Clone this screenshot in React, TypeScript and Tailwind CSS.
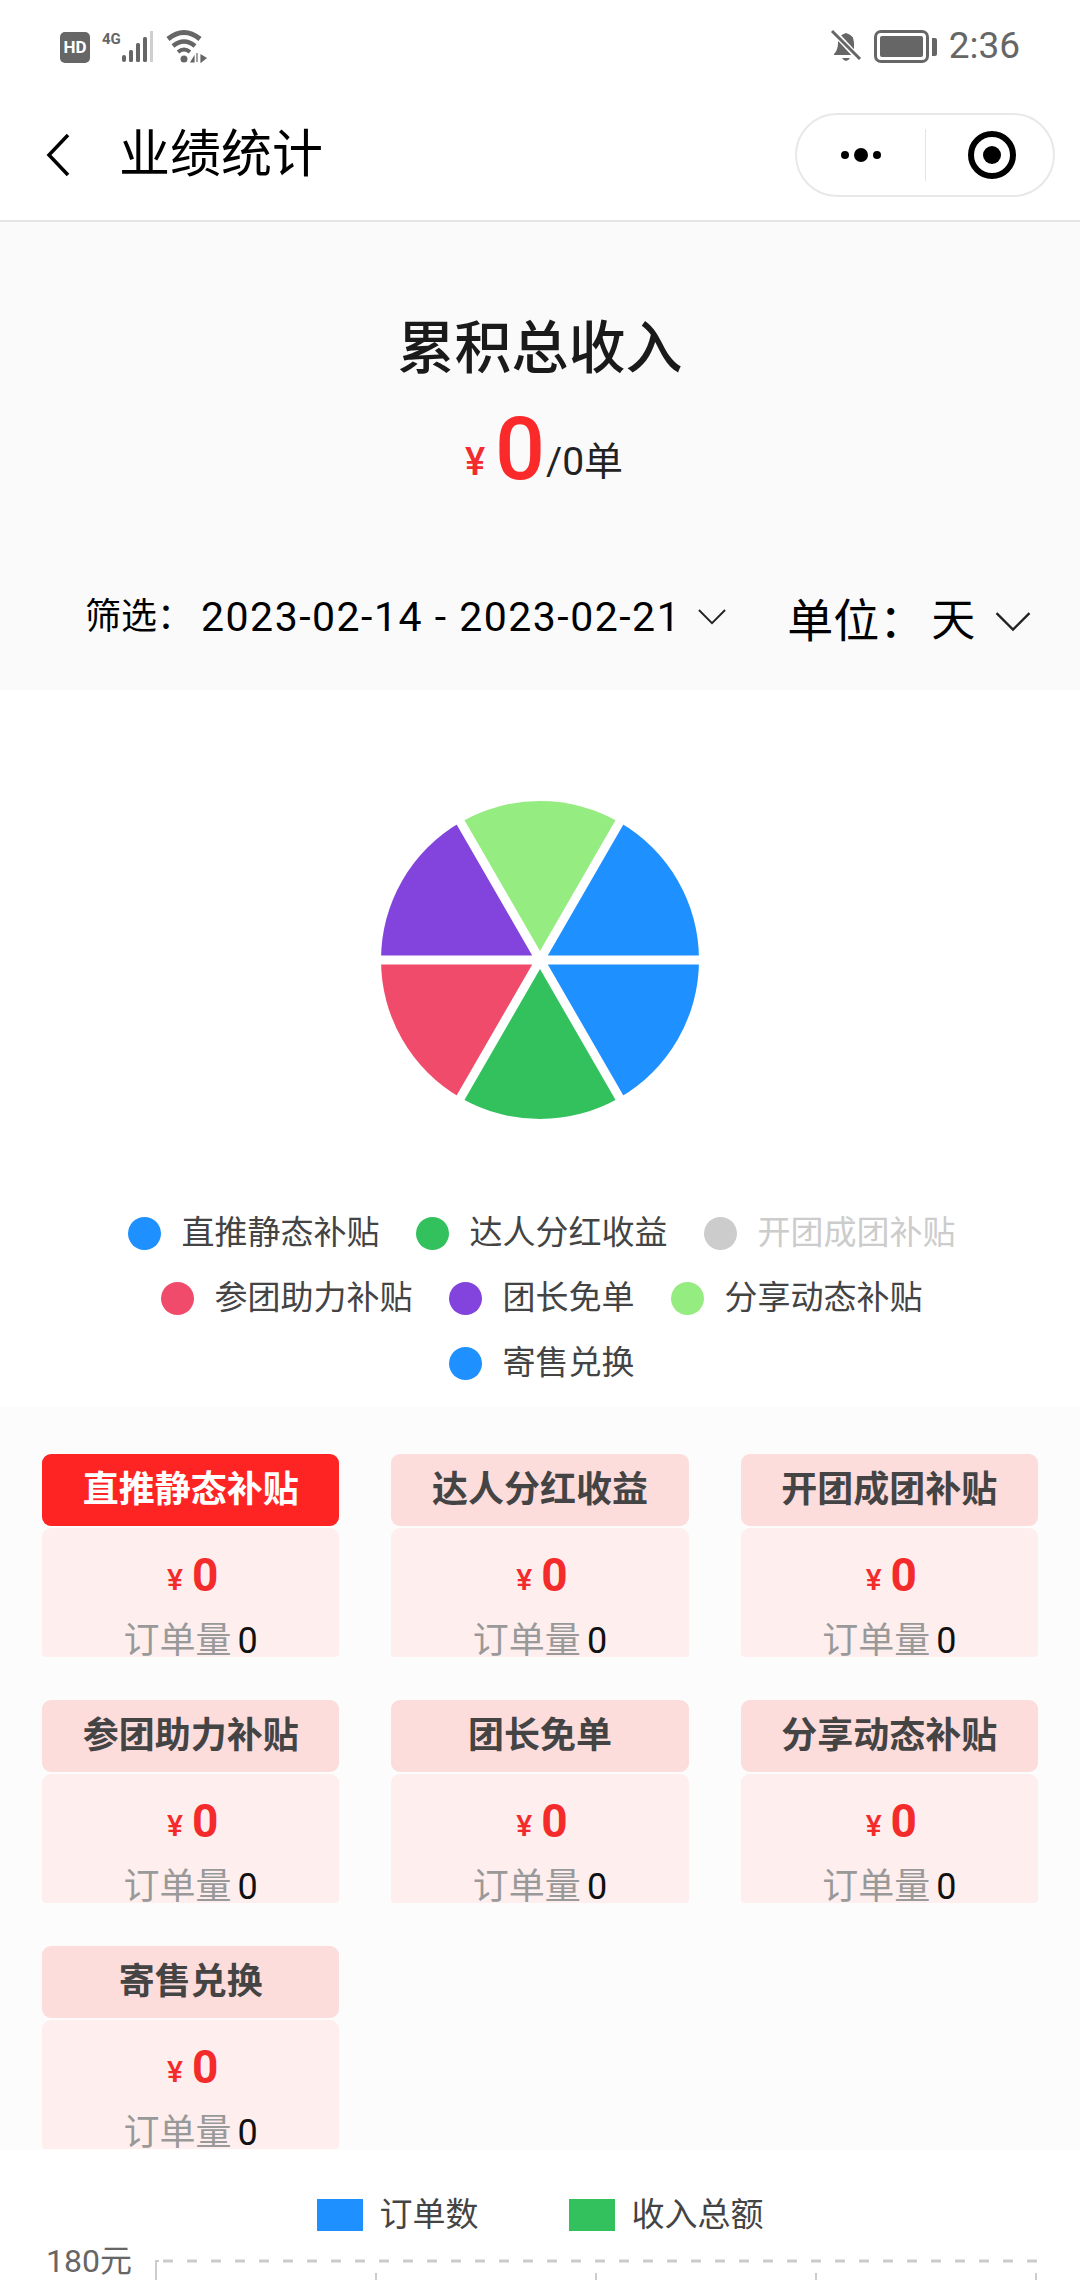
const legendRows = [
  [
    { name: '直推静态补贴', color: 'bg-[#1e90ff]', text: 'text-[#444444]' },
    { name: '达人分红收益', color: 'bg-[#33c15e]', text: 'text-[#444444]' },
    { name: '开团成团补贴', color: 'bg-[#cccccc]', text: 'text-[#cccccc]' },
  ],
  [
    { name: '参团助力补贴', color: 'bg-[#f04b6b]', text: 'text-[#444444]' },
    { name: '团长免单', color: 'bg-[#8244dd]', text: 'text-[#444444]' },
    { name: '分享动态补贴', color: 'bg-[#95ec80]', text: 'text-[#444444]' },
  ],
  [{ name: '寄售兑换', color: 'bg-[#1e90ff]', text: 'text-[#444444]' }],
];

const cards = ['直推静态补贴', '达人分红收益', '开团成团补贴', '参团助力补贴', '团长免单', '分享动态补贴', '寄售兑换'];

function StatusBar() {
  return (
    <div className="h-[70px] flex items-end justify-between pl-[60px] pr-[60px] pb-[7px]">
      <div className="flex items-end">
        <svg width="190" height="34" viewBox="0 0 190 34">
          <rect x="0" y="3" width="30" height="31" rx="5" fill="#666666" />
          <text x="15" y="24" textAnchor="middle" fontSize="17" fontWeight="700" fill="#ffffff" fontFamily="Roboto">HD</text>
          <text x="42" y="15" fontSize="15" fontWeight="700" fill="#666666" fontFamily="Roboto">4G</text>
          <rect x="62" y="26" width="4" height="7" rx="2" fill="#666666" />
          <rect x="69" y="21" width="4" height="12" rx="1.5" fill="#666666" />
          <rect x="76" y="14" width="4" height="19" rx="1.5" fill="#666666" />
          <rect x="83" y="8" width="4" height="25" rx="1.5" fill="#666666" />
          <rect x="90" y="2" width="3" height="31" fill="#cfcfcf" />
          <path d="M108 10 Q124 -3 140 10" fill="none" stroke="#666666" strokeWidth="5" />
          <path d="M113 17 Q124 8 135 17" fill="none" stroke="#666666" strokeWidth="4.5" />
          <path d="M118 23 Q124 18 130 23" fill="none" stroke="#666666" strokeWidth="4" />
          <circle cx="124" cy="30" r="3.5" fill="#666666" />
          <path d="M134 33 L134 28 L131 33 Z M137 24 L137 33 M141 26 L141 33 L146 29 Z" fill="#666666" stroke="#666666" strokeWidth="1.2" />
        </svg>
      </div>
      <div className="flex items-end gap-[12px]">
        <svg width="32" height="34" viewBox="0 0 32 34">
          <path d="M4 25 Q8 21 8 14 Q8 6 16 4 Q24 6 24 14 L24 21 L28 26 L4 26 Z" fill="#666666" />
          <path d="M12 29 Q16 35 20 29 Z" fill="#666666" />
          <path d="M2 1 L30 31" stroke="#ffffff" strokeWidth="6" />
          <path d="M2 2 L30 30" stroke="#666666" strokeWidth="3" />
        </svg>
        <div className="flex items-center gap-[3px]">
          <div className="w-[55px] h-[33px] rounded-[7px] border-[3px] border-[#666666] p-[3px]">
            <div className="w-full h-full rounded-[2px] bg-[#666666]" />
          </div>
          <div className="w-[5px] h-[18px] rounded-r-[2px] bg-[#666666]" />
        </div>
        <div className="text-[37px] leading-[34px] text-[#666666]">2:36</div>
      </div>
    </div>
  );
}

function NavBar() {
  return (
    <div className="h-[152px] border-b-2 border-[#e4e4e4] flex items-center justify-between pl-[46px] pr-[25px] pt-[20px]">
      <div className="flex items-center gap-[49px]">
        <svg width="24" height="44" viewBox="0 0 24 44">
          <path d="M22 2 L3 22 L22 42" fill="none" stroke="#000000" strokeWidth="3.5" />
        </svg>
        <div className="text-[51px] leading-[60px] text-black">业绩统计</div>
      </div>
      <div className="w-[260px] h-[84px] rounded-full border-2 border-[#e8e8e8] flex items-center">
        <div className="w-[129px] h-[52px] border-r border-[#e4e4e4] flex items-center justify-center gap-[5px]">
          <div className="w-[8px] h-[8px] rounded-full bg-black" />
          <div className="w-[14px] h-[14px] rounded-full bg-black" />
          <div className="w-[8px] h-[8px] rounded-full bg-black" />
        </div>
        <div className="flex-1 pl-[5px] flex items-center justify-center">
          <div className="w-[48px] h-[48px] rounded-full border-[6px] border-black flex items-center justify-center">
            <div className="w-[18px] h-[18px] rounded-full bg-black" />
          </div>
        </div>
      </div>
    </div>
  );
}

function Chevron({ width, height }: { width: number; height: number }) {
  return (
    <svg width={width} height={height} viewBox="0 0 30 17" className="shrink-0">
      <path d="M1 1 L15 15 L29 1" fill="none" stroke="#222222" strokeWidth="2" />
    </svg>
  );
}

function Summary() {
  return (
    <div className="h-[468px] shrink-0 bg-[#fafafa] flex flex-col items-center">
      <div className="mt-[95px] text-[57px] leading-[64px] font-medium text-[#1a1a1a]">累积总收入</div>
      <div className="mt-[18px] h-[100px] flex items-end text-[#222222] ml-[8px]">
        <span className="text-[38px] leading-[74px] font-medium text-[#f22c2c] mr-[10px]">¥</span>
        <span className="text-[88px] leading-[100px] font-medium text-[#fb2a2a]">0</span>
        <span className="text-[39px] leading-[74px] ml-[1px]">/0单</span>
      </div>
      <div className="mt-[84px] self-stretch flex items-center pl-[85px] text-black whitespace-nowrap">
        <span className="text-[36px] leading-[50px] shrink-0">筛选：</span>
        <span className="text-[41px] leading-[50px] ml-[8px] tracking-[1.5px] shrink-0">2023-02-14 - 2023-02-21</span>
        <div className="ml-[17px]"><Chevron width={28} height={16} /></div>
        <span className="ml-[61px] text-[46px] leading-[60px] pt-[8px] shrink-0">单位：</span>
        <span className="ml-[6px] text-[44px] leading-[60px] pt-[8px] shrink-0">天</span>
        <div className="ml-[20px] mt-[10px]"><Chevron width={36} height={20} /></div>
      </div>
    </div>
  );
}

function Pie() {
  return (
    <svg width="340" height="340" viewBox="0 0 340 340" className="shrink-0">
      <path d="M170 170 L329 170 A159 159 0 0 0 249.5 32.3 Z" fill="#1e90ff" />
      <path d="M170 170 L249.5 32.3 A159 159 0 0 0 90.5 32.3 Z" fill="#95ec80" />
      <path d="M170 170 L90.5 32.3 A159 159 0 0 0 11 170 Z" fill="#8244dd" />
      <path d="M170 170 L11 170 A159 159 0 0 0 90.5 307.7 Z" fill="#f04b6b" />
      <path d="M170 170 L90.5 307.7 A159 159 0 0 0 249.5 307.7 Z" fill="#33c15e" />
      <path d="M170 170 L249.5 307.7 A159 159 0 0 0 329 170 Z" fill="#1e90ff" />
      <path d="M0 170 L340 170 M71.9 340 L268.1 0 M71.9 0 L268.1 340" stroke="#ffffff" strokeWidth="9" />
    </svg>
  );
}

function PieSection() {
  return (
    <div className="h-[717px] shrink-0 bg-white flex flex-col items-center pt-[100px]">
      <Pie />
      <div className="mt-[83px] pl-[3px] flex flex-col items-center gap-[25px]">
        {legendRows.map((row, i) => (
          <div key={i} className="flex gap-[36px] h-[40px]">
            {row.map((item) => (
              <div key={item.name} className="flex items-center gap-[21px]">
                <div className={`w-[33px] h-[33px] rounded-full ${item.color}`} />
                <span className={`text-[33px] leading-[40px] ${item.text}`}>{item.name}</span>
              </div>
            ))}
          </div>
        ))}
      </div>
    </div>
  );
}

function Card({ title, active }: { title: string; active: boolean }) {
  return (
    <div className="h-[203px] flex flex-col gap-[2px]">
      <div className={`h-[72px] rounded-[9px] flex items-center justify-center text-[36px] font-bold ${active ? 'bg-[#ff2424] text-white' : 'bg-[#fddcdc] text-[#444444]'}`}>
        {title}
      </div>
      <div className="h-[129px] rounded-t-[9px] rounded-b-[4px] bg-[#feeeee] flex flex-col items-center">
        <div className="mt-[22px] ml-[4px] h-[50px] flex items-end gap-[9px] text-[#f32b2b]">
          <span className="text-[30px] leading-[40px] font-medium">¥</span>
          <span className="text-[46px] leading-[50px] font-bold">0</span>
        </div>
        <div className="mt-[25px] text-[36px] leading-[32px] text-[#999999]">
          订单量<span className="ml-[6px] text-[#111111]">0</span>
        </div>
      </div>
    </div>
  );
}

function ChartHead() {
  return (
    <div className="flex-1 bg-white flex flex-col">
      <div className="mt-[49px] h-[32px] flex justify-center gap-[90px]">
        <div className="flex items-center gap-[17px]">
          <div className="w-[46px] h-[32px] bg-[#1e90ff]" />
          <span className="text-[33px] leading-[40px] text-[#444444]">订单数</span>
        </div>
        <div className="flex items-center gap-[17px]">
          <div className="w-[46px] h-[32px] bg-[#33c15e]" />
          <span className="text-[33px] leading-[40px] text-[#444444]">收入总额</span>
        </div>
      </div>
      <div className="mt-[12px] flex pl-[46px]">
        <span className="text-[32px] leading-[36px] text-[#666666] w-[107px] shrink-0">180元</span>
        <svg width="888" height="37" viewBox="0 0 888 37" className="shrink-0">
          <path d="M3 37 L3 18 L6 18" fill="none" stroke="#cccccc" strokeWidth="2" />
          <path d="M10 18 L884 18" fill="none" stroke="#cccccc" strokeWidth="3" strokeDasharray="10 14" />
          <path d="M223 30 L223 37 M443 30 L443 37 M663 30 L663 37 M883 30 L883 37" stroke="#cccccc" strokeWidth="2" />
        </svg>
      </div>
    </div>
  );
}

export default function App() {
  return (
    <div className="w-[1080px] h-[2280px] overflow-hidden bg-white flex flex-col font-['Roboto','Noto_Sans_CJK_SC',sans-serif]">
      <StatusBar />
      <NavBar />
      <Summary />
      <PieSection />
      <div className="h-[743px] shrink-0 bg-[#fcfcfc] pt-[47px] pl-[42px] pr-[42px]">
        <div className="grid grid-cols-3 gap-x-[52px] gap-y-[43px]">
          {cards.map((title, i) => (
            <Card key={title} title={title} active={i === 0} />
          ))}
        </div>
      </div>
      <ChartHead />
    </div>
  );
}
